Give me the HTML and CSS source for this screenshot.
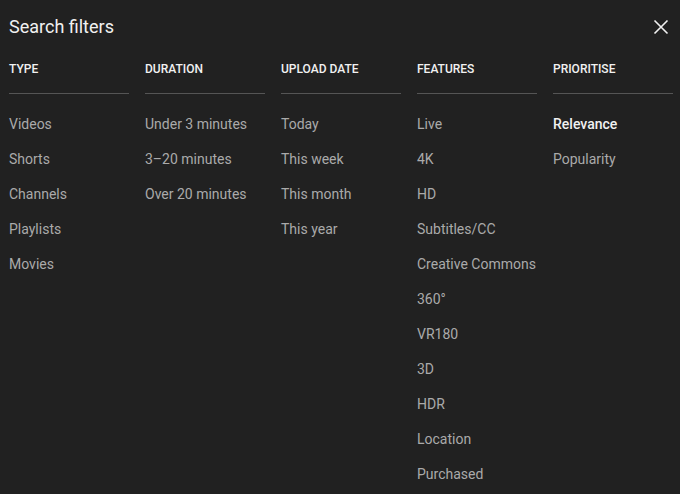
FILE: index.html
```html
<!DOCTYPE html>
<html lang="en">
  <head>
    <meta charset="UTF-8">
    <meta name="viewport" content="width=device-width, initial-scale=1.0">
    <title>Search filters</title>
    <link rel="stylesheet" href="styles.css">
  </head>
  <body>
    <div class="dialog">
      <div class="dialog-header">
        <h2>Search filters</h2>
        <button class="close-button" aria-label="Close">
          <svg viewBox="0 0 24 24" width="24" height="24"><path d="M5.5 5.5l13 13M18.5 5.5l-13 13" stroke="#f1f1f1" stroke-width="1.6" fill="none"/></svg>
        </button>
      </div>
      <div class="filter-groups">
        <div class="filter-group">
          <h4>Type</h4>
          <div class="filter-item">Videos</div>
          <div class="filter-item">Shorts</div>
          <div class="filter-item">Channels</div>
          <div class="filter-item">Playlists</div>
          <div class="filter-item">Movies</div>
        </div>
        <div class="filter-group">
          <h4>Duration</h4>
          <div class="filter-item">Under 3 minutes</div>
          <div class="filter-item">3–20 minutes</div>
          <div class="filter-item">Over 20 minutes</div>
        </div>
        <div class="filter-group">
          <h4>Upload date</h4>
          <div class="filter-item">Today</div>
          <div class="filter-item">This week</div>
          <div class="filter-item">This month</div>
          <div class="filter-item">This year</div>
        </div>
        <div class="filter-group">
          <h4>Features</h4>
          <div class="filter-item">Live</div>
          <div class="filter-item">4K</div>
          <div class="filter-item">HD</div>
          <div class="filter-item">Subtitles/CC</div>
          <div class="filter-item">Creative Commons</div>
          <div class="filter-item">360°</div>
          <div class="filter-item">VR180</div>
          <div class="filter-item">3D</div>
          <div class="filter-item">HDR</div>
          <div class="filter-item">Location</div>
          <div class="filter-item">Purchased</div>
        </div>
        <div class="filter-group">
          <h4>Prioritise</h4>
          <div class="filter-item selected">Relevance</div>
          <div class="filter-item">Popularity</div>
        </div>
      </div>
    </div>
  </body>
</html>
```

FILE: styles.css
```css
:root {
  --background-color: #212121;
  --text-color: #f1f1f1;
  --muted-color: #aaaaaa;
  --divider-color: #555555;
}

body {
  margin: 0;
  background-color: var(--background-color);
  color: var(--text-color);
  font-family: Roboto, 'Noto Sans', Arial, sans-serif;
  overflow: hidden;
}

.dialog {
  padding: 14px 0 0 9px;
}

.dialog-header {
  display: flex;
  align-items: center;
  justify-content: space-between;
  height: 26px;
}

.dialog-header h2 {
  margin: 0;
  font-size: 18px;
  font-weight: 400;
  line-height: 26px;
}

.close-button {
  display: flex;
  padding: 0;
  margin-right: 7px;
  background: none;
  border: none;
  cursor: pointer;
}

.filter-groups {
  display: flex;
  gap: 16px;
  margin-top: 21px;
}

.filter-group {
  width: 120px;
  flex-shrink: 0;
}

.filter-group h4 {
  margin: 0 0 13px;
  padding-bottom: 16px;
  border-bottom: 1px solid var(--divider-color);
  font-size: 12px;
  font-weight: 500;
  line-height: 16px;
  text-transform: uppercase;
}

.filter-item {
  font-size: 14px;
  line-height: 35px;
  color: var(--muted-color);
  white-space: nowrap;
}

.filter-item.selected {
  color: var(--text-color);
  font-weight: 500;
}
```
